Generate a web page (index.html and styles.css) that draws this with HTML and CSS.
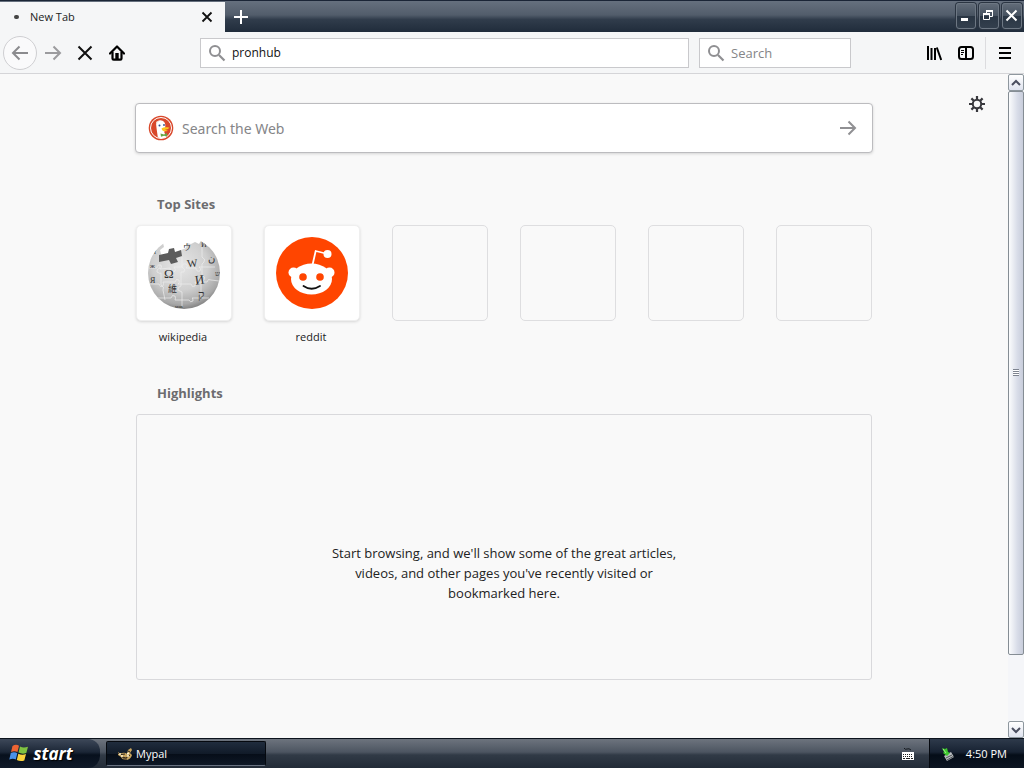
FILE: index.html
```html
<!DOCTYPE html>
<html lang="en">
<head>
  <meta charset="UTF-8">
  <title>New Tab</title>
  <link rel="stylesheet" href="styles.css">
</head>
<body>

<header class="titlebar">
  <div class="tab">
    <span class="tab-dot"></span>
    <span class="tab-title">New Tab</span>
    <button class="tab-close" aria-label="Close tab">
      <svg width="12" height="12" viewBox="0 0 12 12"><path d="M1.5 1.5l9 9M10.5 1.5l-9 9" stroke="#111" stroke-width="1.8"/></svg>
    </button>
  </div>
  <button class="new-tab" aria-label="New tab">
    <svg width="16" height="16" viewBox="0 0 16 16"><path d="M8 1v14M1 8h14" stroke="#fff" stroke-width="2"/></svg>
  </button>
  <div class="window-buttons">
    <button aria-label="Minimize">
      <svg width="14" height="14" viewBox="0 0 14 14"><path d="M2 9h7v3H2z" fill="#fff"/></svg>
    </button>
    <button aria-label="Restore">
      <svg width="14" height="14" viewBox="0 0 14 14" fill="none" stroke="#fff"><path d="M4.500 4V2.500h6v5H8"/><path d="M4 2h7" stroke-width="2"/><path d="M1.500 5.500h6v5h-6z"/><path d="M1 5h7" stroke-width="2"/></svg>
    </button>
    <button aria-label="Close">
      <svg width="14" height="14" viewBox="0 0 14 14"><path d="M1.500 1.500l10 10M11.500 1.500l-10 10" stroke="#fff" stroke-width="2"/></svg>
    </button>
  </div>
</header>

<nav class="toolbar">
  <div class="nav-buttons">
    <button class="back" aria-label="Back">
      <svg width="18" height="16" viewBox="0 0 18 16" fill="none" stroke="#8b8b8e" stroke-width="2"><path d="M17 8H2M8.500 1.500L2 8l6.500 6.500"/></svg>
    </button>
    <button aria-label="Forward">
      <svg width="18" height="16" viewBox="0 0 18 16" fill="none" stroke="#9b9b9e" stroke-width="2"><path d="M1 8h15M9.500 1.500L16 8l-6.500 6.500"/></svg>
    </button>
    <button aria-label="Stop">
      <svg width="16" height="16" viewBox="0 0 16 16"><path d="M1.500 1.500l13 13M14.500 1.500l-13 13" stroke="#111" stroke-width="2"/></svg>
    </button>
    <button aria-label="Home">
      <svg width="16" height="16" viewBox="0 0 16 16"><path d="M1 8.500L8 1.500l7 7" fill="none" stroke="#000" stroke-width="2.200" stroke-linecap="round" stroke-linejoin="round"/><path d="M3.500 7v6.500q0 1.200 1.200 1.200h6.600q1.200 0 1.200-1.200V7" fill="none" stroke="#000" stroke-width="2.200"/><path d="M6.300 8h3.400v6.500H6.300z"/></svg>
    </button>
  </div>
  <label class="field address">
    <svg width="18" height="18" viewBox="0 0 18 18" fill="none" stroke="#8f8f92"><circle cx="7" cy="7" r="5" stroke-width="2"/><path d="M11 11l5.500 5.500" stroke-width="2.200"/></svg>
    <input type="text" value="pronhub" aria-label="Address">
  </label>
  <label class="field search">
    <svg width="18" height="18" viewBox="0 0 18 18" fill="none" stroke="#8f8f92"><circle cx="7" cy="7" r="5" stroke-width="2"/><path d="M11 11l5.500 5.500" stroke-width="2.200"/></svg>
    <input type="text" placeholder="Search" aria-label="Search">
  </label>
  <div class="tool-buttons">
    <button aria-label="Library">
      <svg width="16" height="16" viewBox="0 0 16 16" stroke="#000" stroke-width="2"><path d="M2 1v14M5.500 3v12M9 3v12M10.800 2.500L15.200 15"/></svg>
    </button>
    <button aria-label="Sidebars">
      <svg width="16" height="16" viewBox="0 0 16 16" fill="none" stroke="#000"><rect x="1" y="2" width="14" height="12" rx="2.500" stroke-width="2"/><path d="M8 2v12" stroke-width="2"/><path d="M3 5.500h3M3 7.500h3M3 9.500h2"/></svg>
    </button>
    <button class="menu" aria-label="Menu">
      <svg width="16" height="16" viewBox="0 0 16 16" stroke="#000" stroke-width="2"><path d="M2 3h12M2 8h12M2 13h12"/></svg>
    </button>
  </div>
</nav>

<div class="viewport">
  <main class="page">
    <button class="settings" aria-label="Settings">
      <svg width="18" height="18" viewBox="0 0 18 18" fill="none" stroke="#38383d"><circle cx="9" cy="9" r="4.200" stroke-width="2"/><path d="M9 1v3.500M9 13.500V17M1 9h3.500M13.500 9H17M3.400 3.400l2.400 2.400M12.200 12.200l2.400 2.400M14.600 3.400l-2.400 2.400M5.800 12.200l-2.400 2.400" stroke-width="2.200"/></svg>
    </button>

    <form class="web-search">
      <svg width="26" height="26" viewBox="0 0 26 26">
        <circle cx="13" cy="13" r="12.300" fill="#d9482b"/>
        <circle cx="13" cy="13" r="10.500" fill="#d9482b" stroke="#fff" stroke-width="1"/>
        <path d="M8 8c1-2.500 4-3.500 6.500-2.200 2.300 1.100 3 3 2.800 5.500l-1 6 2 5q-5 1.700-8.500 0L8.500 13z" fill="#fff"/>
        <path d="M10.500 6.500Q8 6 8.500 9" fill="none" stroke="#eed6ca"/>
        <circle cx="11.500" cy="10.500" r="1" fill="#2d4f8e"/>
        <circle cx="16" cy="10" r="0.900" fill="#2d4f8e"/>
        <path d="M13.500 13.500c2-1.500 5-1.500 8-.8-1 1.400-3 1.800-4.500 2 1 .7 2 .8 3 .7-2 1.600-6 1.300-6.500-1.900z" fill="#fdc61f"/>
        <path d="M12.500 18.500l3.500 1 3-1.500v3.500l-3-.7-3 1z" fill="#65a843"/>
      </svg>
      <input type="text" placeholder="Search the Web" aria-label="Search the Web">
      <button type="button" aria-label="Go">
        <svg width="18" height="16" viewBox="0 0 18 16" fill="none" stroke="#909093" stroke-width="2"><path d="M1 8h15M9.500 1.500L16 8l-6.500 6.500"/></svg>
      </button>
    </form>

    <section class="top-sites">
      <h2>Top Sites</h2>
      <ul>
        <li>
          <a href="#">
            <span class="tile">
              <svg width="76" height="76" viewBox="0 0 76 76">
                <defs>
                  <radialGradient id="globe" cx="42%" cy="38%" r="62%">
                    <stop offset="0" stop-color="#e6e6e6"/>
                    <stop offset="0.550" stop-color="#cfcfcf"/>
                    <stop offset="0.850" stop-color="#a8a8a8"/>
                    <stop offset="1" stop-color="#777"/>
                  </radialGradient>
                  <clipPath id="globe-edge"><circle cx="38" cy="38" r="36"/></clipPath>
                </defs>
                <g clip-path="url(#globe-edge)">
                  <path d="M0 14L13 6l8-3-4 5 1 4-4 3 1 4-2 4 8-2 3 1 8-3 3-4 5-2 1-5 4 1 4-2 4 2 3-5 5 1 2-3 18 4v70H0z" fill="url(#globe)"/>
                  <path d="M13 20l9-2 1-4 5-1 1 4 6-2 1 6-6 2 2 4-7 2-2-4-10 2z" fill="#5c5c5c"/>
                  <g fill="none" stroke="#eee" stroke-width="0.700">
                    <path d="M3 33h8q0-4 4-3 2 3-1 4l10-1q0 5 4 4 3-2 0-5h8q0-4 4-3 3 2 0 4h10q0 4 4 3 2-3-1-4h16"/>
                    <path d="M4 49h9q1 4 4 2 1-3 0-4h12q1-4 4-2 1 3-1 4h13q1 4 4 2 1-3 0-4h12q1-4 4-2l8 1"/>
                    <path d="M12 63h13q1-4 4-2 1 2 0 4h14q1 3 4 1 0-3-1-3h17"/>
                    <path d="M14 30v3q-4 1-3 4 3 2 4 1v12q4 2 2 5l2 10M36 22v10q4 2 2 5h-3v14q-4 1-3 4l4 2v15M56 10v12q4 2 2 5l-2 2v11q4 2 2 5l-3 2v15"/>
                  </g>
                  <g class="glyphs">
                    <text x="18" y="43" font-size="13">Ω</text>
                    <text x="41" y="32" font-size="11" transform="rotate(-6 46 28)">W</text>
                    <text x="49" y="49" font-size="13" transform="rotate(-8 54 45)">И</text>
                    <text x="22" y="57" font-size="9">維</text>
                    <text x="52" y="64" font-size="12">ק</text>
                    <text x="62" y="27" font-size="10">ن</text>
                    <text x="37" y="15" font-size="8">ウ</text>
                    <text x="55" y="12" font-size="8">Й</text>
                    <text x="4" y="33" font-size="7">ж</text>
                    <text x="4" y="48" font-size="8">Я</text>
                    <text x="69" y="41" font-size="7">ש</text>
                    <text x="29" y="73" font-size="5">мав</text>
                    <text x="8" y="19" font-size="7">ї</text>
                  </g>
                </g>
              </svg>
            </span>
            <span class="site-name">wikipedia</span>
          </a>
        </li>
        <li>
          <a href="#">
            <span class="tile">
              <svg width="72" height="72" viewBox="0 0 72 72">
                <circle cx="36" cy="36" r="36" fill="#ff4500"/>
                <path d="M36.500 28l3.200-14 12 3" fill="none" stroke="#fff" stroke-width="1.800" stroke-linejoin="round"/>
                <circle cx="51.500" cy="17" r="4" fill="#fff"/>
                <circle cx="17.500" cy="35.500" r="5" fill="#fff"/>
                <circle cx="53.500" cy="35.500" r="5" fill="#fff"/>
                <ellipse cx="35.500" cy="42" rx="20.500" ry="15.500" fill="#fff"/>
                <circle cx="27" cy="40" r="3.800" fill="#ff4500"/>
                <circle cx="44" cy="40" r="3.800" fill="#ff4500"/>
                <path d="M27.500 49q8 5.500 16.500 0" fill="none" stroke="#111" stroke-width="1.800" stroke-linecap="round"/>
              </svg>
            </span>
            <span class="site-name">reddit</span>
          </a>
        </li>
        <li><span class="tile empty"></span></li>
        <li><span class="tile empty"></span></li>
        <li><span class="tile empty"></span></li>
        <li><span class="tile empty"></span></li>
      </ul>
    </section>

    <section class="highlights">
      <h2>Highlights</h2>
      <div class="highlights-box">
        <p>Start browsing, and we'll show some of the great articles, videos, and other pages you've recently visited or bookmarked here.</p>
      </div>
    </section>
  </main>

  <div class="scrollbar">
    <button aria-label="Scroll up">
      <svg width="10" height="8" viewBox="0 0 10 8"><path d="M1 6l4-4 4 4" fill="none" stroke="#4a4e60" stroke-width="2"/></svg>
    </button>
    <div class="track">
      <div class="thumb"><span class="grip"></span></div>
    </div>
    <button aria-label="Scroll down">
      <svg width="10" height="8" viewBox="0 0 10 8"><path d="M1 2l4 4 4-4" fill="none" stroke="#4a4e60" stroke-width="2"/></svg>
    </button>
  </div>
</div>

<footer class="taskbar">
  <button class="start">
    <svg width="20" height="20" viewBox="0 0 20 20">
      <path d="M3.500 3Q7 .8 10 2.800L8.500 9Q5.500 7.400 2 9z" fill="#ee6433"/>
      <path d="M11 3.500q3.500 1.800 8 .2L17.300 10q-4 1.500-7.800-.5z" fill="#7fc241"/>
      <path d="M1.800 10q3.500-1.700 6.500.2L6.800 16.500Q4 14.800.3 16.500z" fill="#4b92e8"/>
      <path d="M9.300 10.700q3.700 1.800 7.700.4l-1.700 6.300q-4 1.400-7.500-.5z" fill="#fbd33c"/>
    </svg>
    <span>start</span>
  </button>
  <button class="task">
    <svg width="16" height="16" viewBox="0 0 16 16">
      <path d="M1 6q2 2 4 1 3-1 5 1l1-4 3-2 1 2-2 3 2 2q-1 4-5 5-5 0-6-3L1 9z" fill="#c8a45e"/>
      <path d="M1 7l3 1.500L8 8M5 11l4 1 4-3M6 13h4M11 5l2 1" stroke="#2b2118" fill="none"/>
      <path d="M10 8l2-1M4 10h2M10 10h2M2 8h2" stroke="#fff3cf" stroke-width="1.500"/>
    </svg>
    <span>Mypal</span>
  </button>
  <button class="keyboard" aria-label="Keyboard">
    <svg width="14" height="14" viewBox="0 0 14 14"><path d="M3 1q1 2 3 1t4 1" fill="none" stroke="#15191f"/><path d="M1 5h12v8H1z" fill="#fff"/><path d="M2 7.500h10M2 9.500h10" stroke="#222" stroke-dasharray="1 1"/><path d="M2 11.500h2M5 11.500h4M10 11.500h2" stroke="#222"/></svg>
  </button>
  <div class="tray">
    <svg width="16" height="16" viewBox="0 0 16 16"><path d="M4 10l7-4 3 5-7 4z" fill="#b9bdc0"/><path d="M6 12l6-3M7 14l7-4" stroke="#4e5356"/><path d="M2 2l3 1 2-1 1 4 2 1-3 3-4-3 1-1z" fill="#3fc72f"/><path d="M3 3l3 4" stroke="#a2f38a"/></svg>
    <time>4:50 PM</time>
  </div>
</footer>

</body>
</html>
```
FILE: styles.css
```css
* {
  margin: 0;
  padding: 0;
  box-sizing: border-box;
  list-style: none;
}

body {
  display: flex;
  flex-direction: column;
  min-height: 100vh;
  background-color: #f9f9f9;
  color: #222;
  font-family: "Open Sans", "Noto Sans", sans-serif;
  font-size: 12px;
}

svg {
  display: block;
  flex: none;
}

button {
  display: flex;
  align-items: center;
  justify-content: center;
  border: 0;
  background: none;
  font: inherit;
}

input {
  flex: 1;
  min-width: 0;
  border: 0;
  outline: 0;
  background: none;
  color: #111;
  font: inherit;
}

input::placeholder {
  color: #858588;
  opacity: 1;
}

/* title bar */
.titlebar {
  display: flex;
  height: 32px;
  border-top: 1px solid #1b2536;
  background: linear-gradient(#66707e, #525d6b 45%, #303c4b 60%, #202c3b);
}

.tab {
  display: flex;
  align-items: center;
  width: 225px;
  margin-top: 1px;
  padding: 0 10px 1px 14px;
  background-color: #f5f6f7;
  font-size: 11px;
}

.tab-dot {
  width: 5px;
  height: 4px;
  border-radius: 2px;
  background-color: #444;
}

.tab-title {
  flex: 1;
  margin-left: 11px;
}

.tab-close {
  width: 16px;
  height: 16px;
}

.new-tab {
  width: 32px;
}

.window-buttons {
  display: flex;
  gap: 3px;
  margin-left: auto;
  padding: 2px 2px 3px 0;
}

.window-buttons button {
  width: 20px;
  border: 1px solid #6d7783;
  border-radius: 3px;
  background: linear-gradient(#616b78, #465260 48%, #2a3644 52%, #333f4d);
  box-shadow: 0 0 0 1px #2b3542;
}

/* toolbar */
.toolbar {
  display: flex;
  align-items: center;
  height: 42px;
  border-bottom: 1px solid #d5d5d8;
  background-color: #f5f6f7;
}

.nav-buttons {
  display: flex;
  align-items: center;
  width: 200px;
  padding-left: 3px;
}

.nav-buttons button,
.tool-buttons button {
  width: 32px;
  height: 32px;
}

.nav-buttons .back {
  width: 34px;
  height: 34px;
  border: 1px solid #cfcfd2;
  border-radius: 50%;
  background-color: #fafafb;
}

.field {
  display: flex;
  align-items: center;
  gap: 6px;
  height: 30px;
  padding: 0 7px;
  border: 1px solid #c9c9cc;
  background-color: #fff;
}

.field input {
  font-size: 12px;
}

.address {
  flex: 1;
  margin-right: 10px;
}

.search {
  width: 152px;
  margin-right: 67px;
}

.search input {
  font-size: 13px;
}

.tool-buttons {
  display: flex;
}

.tool-buttons .menu {
  width: 39px;
  margin-left: 3px;
  border-left: 1px solid #dcdcdf;
}

/* page */
.viewport {
  display: flex;
  flex: 1;
}

.page {
  position: relative;
  flex: 1;
  padding: 29px 16px 58px;
  background-color: #f9f9f9;
}

.settings {
  position: absolute;
  top: 21px;
  right: 22px;
}

.web-search {
  display: flex;
  align-items: center;
  gap: 8px;
  max-width: 738px;
  height: 50px;
  margin: 0 auto 40px;
  padding: 0 15px 0 12px;
  border: 1px solid #bcbcbf;
  border-radius: 4px;
  background-color: #fff;
  box-shadow: 0 1px 3px rgba(0, 0, 0, 0.15);
}

.web-search input {
  font-family: "Noto Sans", "Open Sans", sans-serif;
  font-size: 14px;
}

.top-sites,
.highlights {
  max-width: 736px;
  margin: 0 auto;
}

h2 {
  padding-left: 21px;
  color: #6c6c6f;
  font-size: 13px;
  line-height: 22px;
}

.top-sites ul {
  display: grid;
  grid-template-columns: repeat(6, 96px);
  justify-content: space-between;
  margin: 10px 0 35px;
}

.top-sites a {
  color: #222;
  text-decoration: none;
}

.tile {
  display: flex;
  align-items: center;
  justify-content: center;
  height: 96px;
  border: 1px solid #efefef;
  border-radius: 5px;
  background-color: #fff;
  box-shadow: 0 1px 3px rgba(0, 0, 0, 0.14);
}

.tile.empty {
  border-color: #dedee0;
  background: none;
  box-shadow: none;
}

.glyphs {
  fill: #333;
  font-family: "Liberation Serif", "Noto Sans CJK SC", serif;
}

.site-name {
  display: block;
  margin-top: 6px;
  padding-right: 2px;
  font-size: 11px;
  line-height: 20px;
  text-align: center;
}

.highlights-box {
  display: flex;
  justify-content: center;
  height: 266px;
  margin-top: 10px;
  padding-top: 128px;
  border: 1px solid #d9d9dc;
  border-radius: 3px;
}

.highlights p {
  max-width: 350px;
  font-size: 13px;
  line-height: 20px;
  text-align: center;
}

/* scrollbar */
.scrollbar {
  display: flex;
  flex-direction: column;
  width: 16px;
  background-color: #f5f6f9;
}

.scrollbar button {
  height: 17px;
  border: 1px solid #8e979e;
  border-radius: 2px;
  background: linear-gradient(#fff, #dfe3ef);
}

.track {
  flex: 1;
}

.thumb {
  display: flex;
  align-items: center;
  justify-content: center;
  height: 89.5%;
  border: 1px solid #858d94;
  border-radius: 2px;
  background: linear-gradient(to right, #fbfcfd, #d8dce8 60%, #c8cddb);
}

.grip {
  width: 6px;
  height: 7px;
  background: repeating-linear-gradient(#7e8490 0 1px, #fff 1px 2px);
}

/* taskbar */
.taskbar {
  display: flex;
  height: 30px;
  border-top: 1px solid #0c131d;
  background: linear-gradient(#6d747e, #4d5561 45%, #313a46 55%, #222b37);
  color: #fff;
  font-size: 11px;
}

.start {
  gap: 4px;
  width: 100px;
  padding-right: 18px;
  padding-bottom: 1px;
  border-radius: 0 12px 12px 0;
  background: linear-gradient(#3d4859, #1b2636 45%, #07101d 55%, #101a29);
  color: #fff;
  font-size: 17px;
  font-style: italic;
  font-weight: 700;
  text-shadow: 1px 1px 1px #000;
}

.task {
  justify-content: flex-start;
  gap: 3px;
  width: 160px;
  margin: 2px 0 2px 6px;
  padding-left: 10px;
  border: 1px solid #05090f;
  border-bottom-color: #687180;
  border-radius: 2px;
  background: linear-gradient(#202c3d, #111b29 50%, #060d18 52%, #0e1826);
  color: #fff;
}

.keyboard {
  width: 14px;
  margin-left: auto;
  margin-right: 14px;
}

.tray {
  display: flex;
  align-items: center;
  gap: 10px;
  padding: 0 17px 0 10px;
  border-left: 1px solid #05090f;
  background: linear-gradient(#2e3a4b, #172232 45%, #050d18 55%, #0c1522);
}
```
